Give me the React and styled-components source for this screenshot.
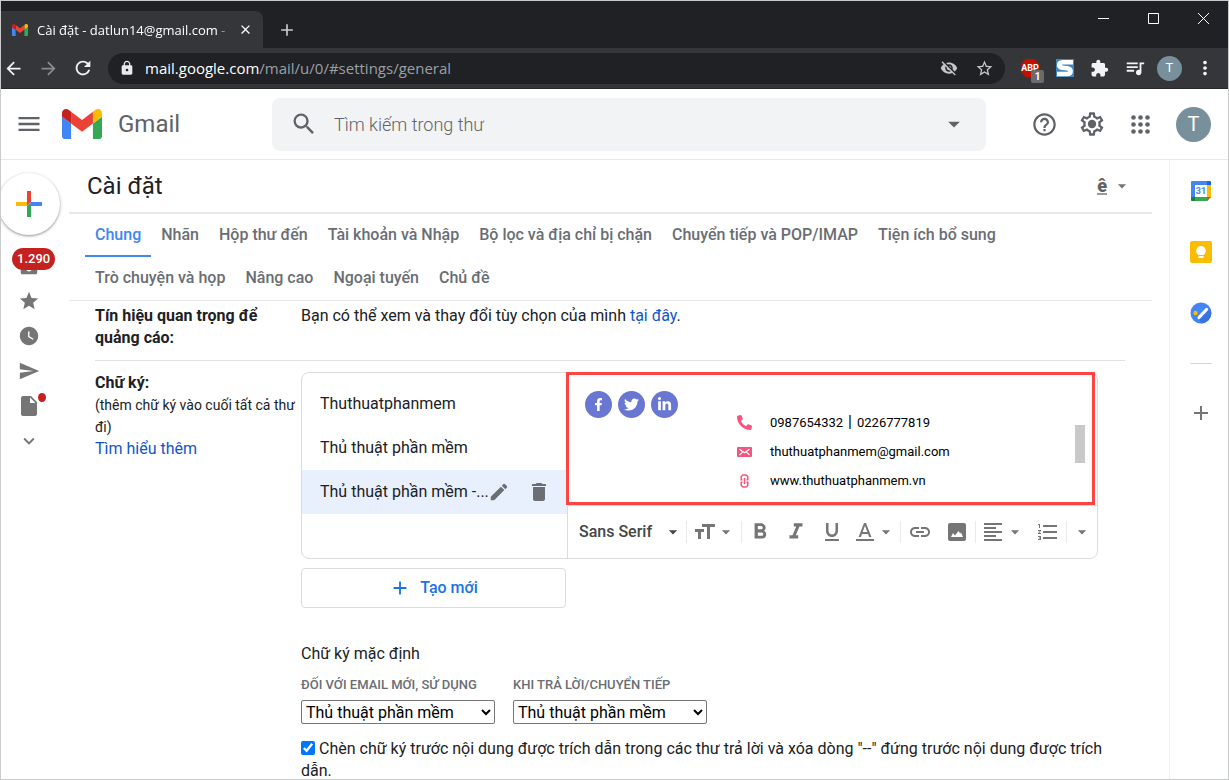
import React from "react";
import styled, { createGlobalStyle } from "styled-components";
import {
    MdAdd,
    MdArrowBack,
    MdArrowDropDown,
    MdArrowForward,
    MdClose,
    MdDelete,
    MdEdit,
    MdExtension,
    MdFormatAlignLeft,
    MdFormatBold,
    MdFormatItalic,
    MdFormatListNumbered,
    MdFormatUnderlined,
    MdHelpOutline,
    MdInbox,
    MdInsertDriveFile,
    MdKeyboardArrowDown,
    MdLink,
    MdLock,
    MdMenu,
    MdMoreVert,
    MdQueueMusic,
    MdRefresh,
    MdSearch,
    MdSend,
    MdStar,
    MdStarBorder,
    MdVisibilityOff,
    MdWatchLater,
} from "react-icons/md";
import { FaFacebookF, FaLinkedinIn, FaPhoneAlt, FaTwitter } from "react-icons/fa";

const GlobalStyle = createGlobalStyle`
    * {
        box-sizing: border-box;
    }
    body {
        margin: 0;
        background: white;
        color: #202124;
        font-family: Roboto, "Liberation Sans", sans-serif;
        font-size: 16px;
        line-height: 22px;
    }
    button, input, select {
        font: inherit;
        color: inherit;
    }
    a {
        color: #1155cc;
        text-decoration: none;
    }
    svg {
        display: block;
        flex: none;
    }
`;

const StyledWindow = styled.div`
    display: flex;
    flex-direction: column;
    height: 100vh;
    overflow: hidden;
    border: 1px solid #c8cbca;
`;

const PlainButton = styled.button`
    display: flex;
    align-items: center;
    justify-content: center;
    flex: none;
    padding: 0;
    border: 0;
    background: transparent;
    cursor: pointer;
`;

/* ---------- browser ---------- */

const TitleBar = styled.div`
    display: flex;
    justify-content: space-between;
    flex: none;
    height: 47px;
    background: #202124;
    color: white;
    font-family: "Open Sans", "Noto Sans", sans-serif;
`;

const TabStrip = styled.div`
    display: flex;
    align-items: flex-end;
`;

const BrowserTab = styled.div`
    display: flex;
    align-items: center;
    gap: 9px;
    width: 262px;
    height: 37px;
    padding: 0 10px 0 11px;
    border-radius: 0 8px 0 0;
    background: #35363a;
    font-size: 13px;
`;

const TabTitle = styled.span`
    flex: 1;
    overflow: hidden;
    white-space: nowrap;
    mask-image: linear-gradient(to right, black 94%, transparent);
`;

const NewTabButton = styled(PlainButton)`
    width: 48px;
    height: 37px;
    color: #c8cacd;
`;

const WindowControls = styled.div`
    display: flex;
`;

const WindowButton = styled(PlainButton)`
    width: 50px;
    height: 35px;
`;

const BrowserToolbar = styled.div`
    display: flex;
    align-items: center;
    flex: none;
    height: 41px;
    padding-right: 6px;
    border-bottom: 1px solid #28292c;
    background: #35363a;
    color: #f1f3f4;
`;

const NavButtons = styled.div`
    display: flex;
    gap: 11px;
    margin-right: 13px;
`;

const NavButton = styled(PlainButton)`
    width: 24px;
    height: 24px;
    opacity: ${(props) => (props.disabled ? 0.45 : 1)};
`;

const AddressBar = styled.div`
    display: flex;
    align-items: center;
    flex: 1;
    height: 31px;
    padding: 0 11px;
    border-radius: 16px;
    background: #202124;
    color: #c4c7c9;
`;

const Address = styled.div`
    flex: 1;
    margin-left: 10px;
    color: #9aa0a6;
    font-family: "Open Sans", "Noto Sans", sans-serif;
    font-size: 15px;
    white-space: nowrap;

    b {
        color: white;
        font-weight: 400;
    }
`;

const AddressActions = styled.div`
    display: flex;
    gap: 17px;
`;

const Extensions = styled.div`
    display: flex;
    margin-left: 7px;
`;

const ExtensionButton = styled(PlainButton)`
    position: relative;
    width: 35px;
    height: 30px;
`;

const ExtensionCount = styled.span`
    position: absolute;
    right: 3px;
    bottom: 0;
    width: 13px;
    height: 13px;
    border-radius: 2px;
    background: #6a6b6e;
    color: white;
    font-size: 10px;
    font-weight: 700;
    line-height: 13px;
`;

const Avatar = styled.span`
    display: flex;
    align-items: center;
    justify-content: center;
    width: ${(props) => props.$size}px;
    height: ${(props) => props.$size}px;
    border-radius: 50%;
    background: #78909c;
    color: white;
    font-size: ${(props) => (props.$size > 30 ? 20 : 13)}px;
`;

/* ---------- mail header ---------- */

const MailHeader = styled.header`
    display: flex;
    align-items: center;
    flex: none;
    height: 71px;
    padding: 0 17px 0 14px;
    border-bottom: 1px solid #e6e8ea;
    color: #5f6368;
`;

const BrandLink = styled.a`
    display: flex;
    align-items: center;
    gap: 16px;
    width: 210px;
    margin-left: 20px;
    color: #5f6368;
    font-size: 24px;
`;

const SearchBox = styled.form`
    display: flex;
    align-items: center;
    flex: 1;
    height: 53px;
    padding: 0 18px;
    border-radius: 8px;
    background: #f1f3f4;
`;

const SearchInput = styled.input`
    flex: 1;
    margin-left: 16px;
    padding: 2px 0 0;
    border: 0;
    outline: 0;
    background: transparent;
    font-size: 18px;
    font-weight: 300;

    &::placeholder {
        color: #5f6368;
        opacity: 1;
    }
`;

const HeaderActions = styled.div`
    display: flex;
    align-items: center;
    margin-left: 34px;
`;

const HeaderButton = styled(PlainButton)`
    justify-content: ${(props) => props.$align || "center"};
    width: ${(props) => props.$width || 48}px;
    height: 48px;
`;

/* ---------- body ---------- */

const MailBody = styled.div`
    display: flex;
    flex: 1;
    min-height: 0;
`;

const Rail = styled.nav`
    display: flex;
    flex-direction: column;
    align-items: center;
    flex: none;
    width: 56px;
    margin-right: 12px;
    color: #757575;
`;

const ComposeButton = styled(PlainButton)`
    width: 62px;
    height: 62px;
    margin: 13px 0;
    border-radius: 50%;
    background: white;
    box-shadow: 0 1px 2px rgba(60, 64, 67, 0.4), 0 1px 3px 1px rgba(60, 64, 67, 0.15);
`;

const RailLink = styled.a`
    position: relative;
    display: flex;
    align-items: center;
    justify-content: center;
    width: 44px;
    height: 35px;
    color: inherit;
`;

const UnreadBadge = styled.span`
    position: absolute;
    top: 0;
    left: 5px;
    padding: 0 5px;
    border-radius: 11px;
    background: #c5221f;
    color: white;
    font-size: 13px;
    font-weight: 500;
`;

const DraftDot = styled.span`
    position: absolute;
    top: 5px;
    right: 5px;
    width: 8px;
    height: 9px;
    border-radius: 50%;
    background: #c5221f;
`;

const Main = styled.main`
    flex: 1;
    min-width: 0;
    padding-right: 17px;
    overflow: hidden;
`;

const SettingsHeader = styled.div`
    display: flex;
    align-items: center;
    justify-content: space-between;
    height: 54px;
    padding: 0 20px 0 18px;
    border-bottom: 2px solid #e6e9eb;
`;

const SettingsTitle = styled.h1`
    margin: 0;
    font-size: 24px;
    font-weight: 400;
`;

const LanguageButton = styled(PlainButton)`
    gap: 5px;
    color: #757575;
`;

const LanguageLetter = styled.span`
    border-bottom: 2px solid #9a9a9a;
    color: #5f6368;
    font-size: 18px;
    font-weight: 900;
    line-height: 15px;
`;

const SettingsTabs = styled.nav`
    display: flex;
    flex-wrap: wrap;
    padding: 0 60px 0 16px;
    border-bottom: 1px solid #e4e7ea;
`;

const SettingsTab = styled.a`
    height: 43px;
    padding: 10px;
    border-bottom: 2px solid ${(props) => (props.$active ? "#4285f4" : "transparent")};
    color: ${(props) => (props.$active ? "#4285f4" : "#6a6e73")};
    font-weight: 500;
`;

const Sections = styled.div`
    padding: 0 27px 0 26px;
`;

const Section = styled.section`
    display: grid;
    grid-template-columns: 206px minmax(0, 1fr);
    padding: ${(props) => props.$top}px 0 11px;
    border-bottom: 1px solid #dfe1e3;
`;

const SectionLabel = styled.div`
    strong {
        display: block;
        font-weight: 700;
    }
    small {
        display: block;
        font-size: 14px;
    }
`;

/* ---------- signature ---------- */

const SignatureBox = styled.div`
    display: grid;
    grid-template-columns: 266px minmax(0, 1fr);
    width: calc(100% - 27px);
    min-height: 187px;
    border: 1px solid #dadce0;
    border-radius: 8px;
`;

const SignatureList = styled.ul`
    margin: 0;
    padding: 9px 0;
    border-right: 1px solid #dadce0;
    list-style: none;
`;

const SignatureItem = styled.li`
    display: flex;
    align-items: center;
    height: 44px;
    padding: 0 16px 0 18px;
    background: ${(props) => (props.$active ? "#e8f0fe" : "transparent")};
    white-space: nowrap;
`;

const ItemActions = styled.div`
    display: flex;
    gap: 20px;
`;

const ItemButton = styled(PlainButton)`
    width: 20px;
    height: 24px;
    color: #6b6f74;
`;

const Editor = styled.div`
    display: flex;
    flex-direction: column;
`;

const Preview = styled.div`
    position: relative;
    display: flex;
    height: 133px;
    padding: 18px 17px;
    border-bottom: 1px solid #dadce0;
    color: black;
    font-size: 13px;
`;

const Highlight = styled.div`
    position: absolute;
    inset: -1px 2px 0 -2px;
    border: 3px solid #ff4444;
    pointer-events: none;
`;

const ScrollThumb = styled.div`
    position: absolute;
    top: 52px;
    right: 12px;
    width: 10px;
    height: 38px;
    background: #c9c9c9;
`;

const SocialLinks = styled.div`
    display: flex;
    gap: 6px;
    width: 152px;
`;

const SocialLink = styled.a`
    display: flex;
    align-items: center;
    justify-content: center;
    width: 27px;
    height: 27px;
    border-radius: 50%;
    background: #6a77d2;
    color: white;
`;

const ContactList = styled.div`
    display: flex;
    flex-direction: column;
    gap: 7px;
    padding-top: 20px;
`;

const ContactRow = styled.div`
    display: flex;
    align-items: center;
    gap: 18px;
    color: #f4557f;

    span {
        color: black;
    }
`;

const PhoneSeparator = styled.span`
    margin: 0 5px;
    font-size: 16px;
`;

const FormatBar = styled.div`
    display: flex;
    align-items: center;
    flex: 1;
    padding-left: 11px;
    color: #757575;
`;

const FormatButton = styled(PlainButton)`
    width: ${(props) => props.$width || 36}px;
    height: 22px;
`;

const FontButton = styled(PlainButton)`
    justify-content: space-between;
    width: 107px;
    padding-right: 3px;
    color: #444746;
    font-weight: 500;
`;

const Divider = styled.span`
    width: 1px;
    height: 22px;
    background: #e8eaed;
`;

const CreateButton = styled(PlainButton)`
    gap: 9px;
    width: 265px;
    height: 40px;
    margin: 9px 0 35px;
    border: 1px solid #dadce0;
    border-radius: 4px;
    color: #1a73e8;
    font-weight: 500;
`;

const DefaultsTitle = styled.h2`
    margin: 0;
    font-size: 16px;
    font-weight: 400;
`;

const DefaultsRow = styled.div`
    display: flex;
    gap: 18px;
    margin: 9px 0 14px;
`;

const SelectField = styled.label`
    display: flex;
    flex-direction: column;
    gap: 4px;
    width: 194px;
    color: #6a6e73;
    font-size: 13px;
    font-weight: 500;
    text-transform: uppercase;
    white-space: nowrap;

    select {
        height: 24px;
        padding: 0;
        border: 1px solid #767676;
        border-radius: 2px;
        background: white;
        color: black;
        font-size: 16px;
        font-weight: 400;
    }
`;

const InsertOption = styled.label`
    display: block;

    input {
        width: 14px;
        height: 14px;
        margin: 0 4px 0 0;
        vertical-align: -1px;
        accent-color: #0075ff;
    }
`;

/* ---------- side panel ---------- */

const SidePanel = styled.aside`
    display: flex;
    flex-direction: column;
    align-items: center;
    flex: none;
    width: 59px;
    padding: 20px 0 0 4px;
    border-left: 1px solid #eeeeee;
    color: #757575;
`;

const SideButton = styled(PlainButton)`
    width: 36px;
    height: 22px;
    margin-bottom: 39px;
`;

const SideDivider = styled.span`
    width: 22px;
    height: 1px;
    margin-bottom: 38px;
    background: #d5d7da;
`;

/* ---------- icons ---------- */

const GmailLogo = ({ size }) => (
    <svg width={size} height={(size * 3) / 4} viewBox="52 42 88 66">
        <path fill="#4285f4" d="M58 108h14V74L52 59v43c0 3.32 2.69 6 6 6" />
        <path fill="#34a853" d="M120 108h14c3.32 0 6-2.69 6-6V59l-20 15" />
        <path fill="#fbbc04" d="M120 48v26l20-15v-8c0-7.42-8.47-11.65-14.4-7.2" />
        <path fill="#ea4335" d="M72 74V48l24 18 24-18v26L96 92" />
        <path fill="#c5221f" d="M52 51v8l20 15V48l-5.6-4.2c-5.94-4.45-14.4-.22-14.4 7.2" />
    </svg>
);

const GearIcon = () => (
    <svg width="28" height="28" viewBox="0 0 24 24" fill="currentColor">
        <path d="M19.43 12.98c.04-.32.07-.64.07-.98 0-.34-.03-.66-.07-.98l2.11-1.65c.19-.15.24-.42.12-.64l-2-3.46c-.09-.16-.26-.25-.44-.25-.06 0-.12.01-.17.03l-2.49 1c-.52-.4-1.08-.73-1.69-.98l-.38-2.65C14.46 2.18 14.25 2 14 2h-4c-.25 0-.46.18-.49.42l-.38 2.65c-.61.25-1.17.59-1.69.98l-2.49-1c-.06-.02-.12-.03-.18-.03-.17 0-.34.09-.43.25l-2 3.46c-.13.22-.07.49.12.64l2.11 1.65c-.04.32-.07.65-.07.98 0 .33.03.66.07.98l-2.11 1.65c-.19.15-.24.42-.12.64l2 3.46c.09.16.26.25.44.25.06 0 .12-.01.17-.03l2.49-1c.52.4 1.08.73 1.69.98l.38 2.65c.03.24.24.42.49.42h4c.25 0 .46-.18.49-.42l.38-2.65c.61-.25 1.17-.59 1.69-.98l2.49 1c.06.02.12.03.18.03.17 0 .34-.09.43-.25l2-3.46c.12-.22.07-.49-.12-.64l-2.11-1.65zm-1.98-1.71c.04.31.05.52.05.73 0 .21-.02.43-.05.73l-.14 1.13.89.7 1.08.84-.7 1.21-1.27-.51-1.04-.42-.9.68c-.43.32-.84.56-1.25.73l-1.06.43-.16 1.13-.2 1.35h-1.4l-.19-1.35-.16-1.13-1.06-.43c-.43-.18-.83-.41-1.23-.71l-.91-.7-1.06.43-1.27.51-.7-1.21 1.08-.84.89-.7-.14-1.13c-.03-.31-.05-.54-.05-.74s.02-.43.05-.73l.14-1.13-.89-.7-1.08-.84.7-1.21 1.27.51 1.04.42.9-.68c.43-.32.84-.56 1.25-.73l1.06-.43.16-1.13.2-1.35h1.39l.19 1.35.16 1.13 1.06.43c.43.18.83.41 1.23.71l.91.7 1.06-.43 1.27-.51.7 1.21-1.07.85-.89.7.14 1.13z" />
        <circle cx="12" cy="12" r="3.6" />
    </svg>
);

const AppsIcon = () => (
    <svg width="19" height="19" viewBox="0 0 19 19" fill="currentColor">
        {[2.5, 9.5, 16.5].map((y) => [2.5, 9.5, 16.5].map((x) => <circle key={`${x}-${y}`} cx={x} cy={y} r="2.3" />))}
    </svg>
);

const ComposeIcon = () => (
    <svg width="28" height="28" viewBox="0 0 28 28">
        <path fill="#ea4335" d="M12 1h4v11l-4 4z" />
        <path fill="#fbbc04" d="M1 12h11v4H1z" />
        <path fill="#34a853" d="M12 16l4-3v14h-4z" />
        <path fill="#4285f4" d="M16 12h11v4H13z" />
    </svg>
);

const AdblockIcon = () => (
    <svg width="18" height="18" viewBox="0 0 18 18">
        <path fill="#c70d00" d="M5 0h8l5 5v8l-5 5H5l-5-5V5z" />
        <text x="9" y="12" fill="white" fontFamily="Roboto, sans-serif" fontSize="9" fontWeight="700" textAnchor="middle">
            ABP
        </text>
    </svg>
);

const SwiftIcon = () => (
    <svg width="18" height="18" viewBox="0 0 18 18">
        <path fill="#3d87c2" d="M0 0h18v18H0z" />
        <path fill="none" stroke="white" strokeWidth="4.6" d="M17 3.3H7C2 3.5 2 8 6.5 8.7l4.500.6c5 .8 4.500 5.700 0 5.700H1" />
    </svg>
);

const MailIcon = () => (
    <svg width="15" height="10" viewBox="0 0 15 10">
        <rect width="15" height="10" rx="1" fill="currentColor" />
        <path fill="none" stroke="white" strokeWidth="1.1" d="M2.500 2.200l5 3.600 5-3.600M2.500 8l3-2.800M12.500 8l-3-2.800" />
    </svg>
);

const ChainIcon = () => (
    <svg width="15" height="14" viewBox="0 0 15 14" fill="none" stroke="currentColor" strokeWidth="1.500">
        <path d="M5.500 5.700H4.200V2.500L5.900.9h3.200l1.700 1.600v3.200H9.500" />
        <path d="M9.500 8.300h1.300v3.200l-1.700 1.600H5.900l-1.700-1.600V8.300h1.300" />
        <path d="M7.500 4v6" />
    </svg>
);

const TextSizeIcon = () => (
    <svg width="24" height="24" viewBox="0 0 24 24" fill="currentColor">
        <path d="M10 4v3h5v12h3V7h5V4H10zM3 12h3v7h3v-7h3V9H3v3z" />
    </svg>
);

const TextColorIcon = () => (
    <svg width="22" height="24" viewBox="0 0 22 24" fill="currentColor">
        <path d="M10 3L4.600 17h2.250l1.120-3h6.060l1.120 3h2.250L12 3h-2zm-1.300 9L11 5.670 13.300 12H8.700z" />
        <path d="M2 19h18v2H2z" />
    </svg>
);

const PictureIcon = () => (
    <svg width="18" height="18" viewBox="0 0 18 18">
        <rect width="18" height="18" rx="2" fill="currentColor" />
        <path fill="white" d="M3 14l2-4 2 2.500L10.500 8l1.700 2.400L13 9.500l2 4.500z" />
    </svg>
);

const CalendarIcon = () => (
    <svg width="22" height="22" viewBox="0 0 22 22">
        <rect x="1" y="1" width="20" height="20" rx="1" fill="#4285f4" />
        <path fill="#1967d2" d="M17 1h3l1 1v3h-4z" />
        <path fill="#fbbc04" d="M17 5h4v12h-4z" />
        <path fill="#34a853" d="M5 17h12v4H5z" />
        <path fill="#188038" d="M1 17h4v4H2l-1-1z" />
        <path fill="white" d="M5 5h12v12H5zM17 21h4v-4z" />
        <path fill="#ea4335" d="M17 17h4l-4 4z" />
        <text x="11" y="14" fill="#4285f4" fontFamily="Roboto, sans-serif" fontSize="9" fontWeight="700" textAnchor="middle">
            31
        </text>
    </svg>
);

const KeepIcon = () => (
    <svg width="22" height="22" viewBox="0 0 22 22">
        <rect width="22" height="22" rx="2" fill="#fbbc04" />
        <path fill="white" d="M11 5a5 5 0 0 0-2.500 9.200V14h5v.2A5 5 0 0 0 11 5zM8.500 15h5v2h-5z" />
    </svg>
);

const TasksIcon = () => (
    <svg width="22" height="22" viewBox="0 0 22 22">
        <circle cx="11" cy="11" r="10.500" fill="#4285f4" />
        <path fill="#3367d6" d="M9 17l9.500-9.500 2.700 2.700A10.500 10.500 0 0 1 11 21.500z" opacity="0.6" />
        <circle cx="5.500" cy="11" r="2.200" fill="#fbbc04" />
        <path stroke="white" strokeWidth="3.200" strokeLinecap="round" d="M9 15.500l7.500-8" />
    </svg>
);

const settingsTabs = [
    "Chung",
    "Nhãn",
    "Hộp thư đến",
    "Tài khoản và Nhập",
    "Bộ lọc và địa chỉ bị chặn",
    "Chuyển tiếp và POP/IMAP",
    "Tiện ích bổ sung",
    "Trò chuyện và họp",
    "Nâng cao",
    "Ngoại tuyến",
    "Chủ đề",
];

const signatures = ["Thuthuatphanmem", "Thủ thuật phần mềm", "Thủ thuật phần mềm -..."];

const Browser = () => (
    <>
        <TitleBar>
            <TabStrip>
                <BrowserTab>
                    <GmailLogo size={16} />
                    <TabTitle>Cài đặt - datlun14@gmail.com - G</TabTitle>
                    <PlainButton aria-label="Đóng thẻ">
                        <MdClose size={15} />
                    </PlainButton>
                </BrowserTab>
                <NewTabButton aria-label="Thẻ mới">
                    <MdAdd size={20} />
                </NewTabButton>
            </TabStrip>
            <WindowControls>
                <WindowButton aria-label="Thu nhỏ">
                    <svg width="11" height="11" stroke="white">
                        <path d="M0 5.500h11" />
                    </svg>
                </WindowButton>
                <WindowButton aria-label="Phóng to">
                    <svg width="11" height="11" stroke="white" fill="none">
                        <path d="M.5.500h10v10H.5z" />
                    </svg>
                </WindowButton>
                <WindowButton aria-label="Đóng">
                    <svg width="11" height="11" stroke="white">
                        <path d="M0 0l11 11M11 0L0 11" />
                    </svg>
                </WindowButton>
            </WindowControls>
        </TitleBar>
        <BrowserToolbar>
            <NavButtons>
                <NavButton aria-label="Quay lại">
                    <MdArrowBack size={21} />
                </NavButton>
                <NavButton aria-label="Tiến" disabled>
                    <MdArrowForward size={21} />
                </NavButton>
                <NavButton aria-label="Tải lại">
                    <MdRefresh size={22} />
                </NavButton>
            </NavButtons>
            <AddressBar>
                <MdLock size={16} color="#e8eaed" />
                <Address>
                    <b>mail.google.com</b>/mail/u/0/#settings/general
                </Address>
                <AddressActions>
                    <MdVisibilityOff size={18} />
                    <MdStarBorder size={19} />
                </AddressActions>
            </AddressBar>
            <Extensions>
                <ExtensionButton aria-label="Chặn quảng cáo">
                    <AdblockIcon />
                    <ExtensionCount>1</ExtensionCount>
                </ExtensionButton>
                <ExtensionButton aria-label="Tiện ích">
                    <SwiftIcon />
                </ExtensionButton>
                <ExtensionButton aria-label="Các tiện ích">
                    <MdExtension size={19} />
                </ExtensionButton>
                <ExtensionButton aria-label="Phương tiện">
                    <MdQueueMusic size={22} />
                </ExtensionButton>
                <ExtensionButton aria-label="Hồ sơ">
                    <Avatar $size={25}>T</Avatar>
                </ExtensionButton>
                <ExtensionButton aria-label="Trình đơn">
                    <MdMoreVert size={22} />
                </ExtensionButton>
            </Extensions>
        </BrowserToolbar>
    </>
);

const Header = () => (
    <MailHeader>
        <HeaderButton $width={27} aria-label="Trình đơn chính">
            <MdMenu size={28} />
        </HeaderButton>
        <BrandLink href="#inbox">
            <GmailLogo size={40} />
            Gmail
        </BrandLink>
        <SearchBox>
            <MdSearch size={28} />
            <SearchInput aria-label="Tìm kiếm trong thư" placeholder="Tìm kiếm trong thư" />
            <PlainButton type="button" aria-label="Tùy chọn tìm kiếm">
                <MdArrowDropDown size={28} />
            </PlainButton>
        </SearchBox>
        <HeaderActions>
            <HeaderButton aria-label="Hỗ trợ">
                <MdHelpOutline size={27} />
            </HeaderButton>
            <HeaderButton aria-label="Cài đặt nhanh">
                <GearIcon />
            </HeaderButton>
            <HeaderButton aria-label="Ứng dụng">
                <AppsIcon />
            </HeaderButton>
            <HeaderButton $width={47} $align="flex-end" aria-label="Tài khoản">
                <Avatar $size={35}>T</Avatar>
            </HeaderButton>
        </HeaderActions>
    </MailHeader>
);

const SignatureEditor = () => (
    <SignatureBox>
        <SignatureList>
            {signatures.map((name, i) => (
                <SignatureItem key={name} $active={i === 2}>
                    {name}
                    {i === 2 && (
                        <ItemActions>
                            <ItemButton aria-label="Sửa">
                                <MdEdit size={22} />
                            </ItemButton>
                            <ItemButton aria-label="Xóa">
                                <MdDelete size={24} />
                            </ItemButton>
                        </ItemActions>
                    )}
                </SignatureItem>
            ))}
        </SignatureList>
        <Editor>
            <Preview>
                <SocialLinks>
                    <SocialLink href="#facebook" aria-label="Facebook">
                        <FaFacebookF size={13} />
                    </SocialLink>
                    <SocialLink href="#twitter" aria-label="Twitter">
                        <FaTwitter size={15} />
                    </SocialLink>
                    <SocialLink href="#linkedin" aria-label="LinkedIn">
                        <FaLinkedinIn size={15} />
                    </SocialLink>
                </SocialLinks>
                <ContactList>
                    <ContactRow>
                        <FaPhoneAlt size={15} />
                        <span>
                            0987654332<PhoneSeparator>|</PhoneSeparator>0226777819
                        </span>
                    </ContactRow>
                    <ContactRow>
                        <MailIcon />
                        <span>thuthuatphanmem@gmail.com</span>
                    </ContactRow>
                    <ContactRow>
                        <ChainIcon />
                        <span>www.thuthuatphanmem.vn</span>
                    </ContactRow>
                </ContactList>
                <ScrollThumb />
                <Highlight />
            </Preview>
            <FormatBar>
                <FontButton>
                    Sans Serif
                    <MdArrowDropDown size={20} />
                </FontButton>
                <Divider />
                <FormatButton $width={54} aria-label="Cỡ chữ">
                    <TextSizeIcon />
                    <MdArrowDropDown size={20} />
                </FormatButton>
                <Divider />
                <FormatButton aria-label="Đậm">
                    <MdFormatBold size={26} />
                </FormatButton>
                <FormatButton aria-label="Nghiêng">
                    <MdFormatItalic size={26} />
                </FormatButton>
                <FormatButton aria-label="Gạch chân">
                    <MdFormatUnderlined size={24} />
                </FormatButton>
                <FormatButton $width={50} aria-label="Màu chữ">
                    <TextColorIcon />
                    <MdArrowDropDown size={20} />
                </FormatButton>
                <Divider />
                <FormatButton $width={38} aria-label="Liên kết">
                    <MdLink size={24} />
                </FormatButton>
                <FormatButton aria-label="Chèn ảnh">
                    <PictureIcon />
                </FormatButton>
                <Divider />
                <FormatButton $width={54} aria-label="Căn chỉnh">
                    <MdFormatAlignLeft size={24} />
                    <MdArrowDropDown size={20} />
                </FormatButton>
                <FormatButton aria-label="Danh sách">
                    <MdFormatListNumbered size={24} />
                </FormatButton>
                <Divider />
                <FormatButton $width={30} aria-label="Tùy chọn khác">
                    <MdArrowDropDown size={20} />
                </FormatButton>
            </FormatBar>
        </Editor>
    </SignatureBox>
);

const Settings = () => (
    <Main>
        <SettingsHeader>
            <SettingsTitle>Cài đặt</SettingsTitle>
            <LanguageButton aria-label="Công cụ nhập">
                <LanguageLetter>ê</LanguageLetter>
                <MdArrowDropDown size={20} />
            </LanguageButton>
        </SettingsHeader>
        <SettingsTabs>
            {settingsTabs.map((tab, i) => (
                <SettingsTab key={tab} href="#settings" $active={i === 0}>
                    {tab}
                </SettingsTab>
            ))}
        </SettingsTabs>
        <Sections>
            <Section $top={4}>
                <SectionLabel>
                    <strong>Tín hiệu quan trọng để quảng cáo:</strong>
                </SectionLabel>
                <div>
                    Bạn có thể xem và thay đổi tùy chọn của mình <a href="#ads">tại đây</a>.
                </div>
            </Section>
            <Section $top={11}>
                <SectionLabel>
                    <strong>Chữ ký:</strong>
                    <small>(thêm chữ ký vào cuối tất cả thư đi)</small>
                    <a href="#help">Tìm hiểu thêm</a>
                </SectionLabel>
                <div>
                    <SignatureEditor />
                    <CreateButton>
                        <MdAdd size={22} />
                        Tạo mới
                    </CreateButton>
                    <DefaultsTitle>Chữ ký mặc định</DefaultsTitle>
                    <DefaultsRow>
                        <SelectField>
                            Đối với email mới, sử dụng
                            <select>
                                <option>Thủ thuật phần mềm</option>
                            </select>
                        </SelectField>
                        <SelectField>
                            Khi trả lời/chuyển tiếp
                            <select>
                                <option>Thủ thuật phần mềm</option>
                            </select>
                        </SelectField>
                    </DefaultsRow>
                    <InsertOption>
                        <input type="checkbox" defaultChecked />
                        Chèn chữ ký trước nội dung được trích dẫn trong các thư trả lời và xóa dòng "--" đứng trước nội dung được trích dẫn.
                    </InsertOption>
                </div>
            </Section>
        </Sections>
    </Main>
);

const App = () => {
    return (
        <>
            <GlobalStyle />
            <StyledWindow>
                <Browser />
                <Header />
                <MailBody>
                    <Rail>
                        <ComposeButton aria-label="Soạn thư">
                            <ComposeIcon />
                        </ComposeButton>
                        <RailLink href="#inbox" aria-label="Hộp thư đến">
                            <MdInbox size={22} />
                            <UnreadBadge>1.290</UnreadBadge>
                        </RailLink>
                        <RailLink href="#starred" aria-label="Có gắn dấu sao">
                            <MdStar size={22} />
                        </RailLink>
                        <RailLink href="#snoozed" aria-label="Đã tạm ẩn">
                            <MdWatchLater size={22} />
                        </RailLink>
                        <RailLink href="#sent" aria-label="Đã gửi">
                            <MdSend size={22} />
                        </RailLink>
                        <RailLink href="#drafts" aria-label="Thư nháp">
                            <MdInsertDriveFile size={24} />
                            <DraftDot />
                        </RailLink>
                        <RailLink href="#more" aria-label="Danh sách mở rộng">
                            <MdKeyboardArrowDown size={22} />
                        </RailLink>
                    </Rail>
                    <Settings />
                    <SidePanel>
                        <SideButton aria-label="Lịch">
                            <CalendarIcon />
                        </SideButton>
                        <SideButton aria-label="Keep">
                            <KeepIcon />
                        </SideButton>
                        <SideButton aria-label="Tasks">
                            <TasksIcon />
                        </SideButton>
                        <SideDivider />
                        <SideButton aria-label="Tải tiện ích bổ sung">
                            <MdAdd size={24} />
                        </SideButton>
                    </SidePanel>
                </MailBody>
            </StyledWindow>
        </>
    );
};

export default App;
